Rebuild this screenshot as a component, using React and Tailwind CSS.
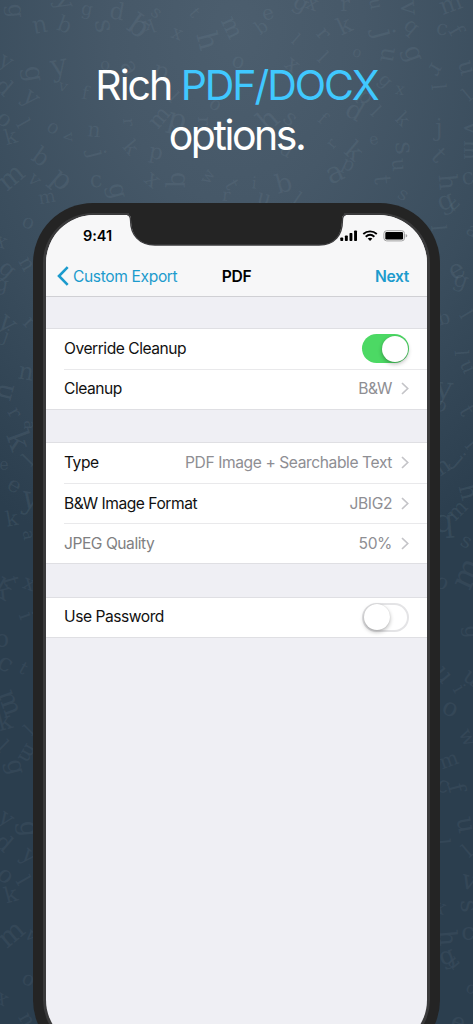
import clsx from 'clsx';

// [character, center x, center y, font size, rotation]
const LETTERS = [
  ['g', 15, 11, 27, 85], ['y', 64, 3, 30, 60], ['g', 87, 10, 22, 10], ['d', 117, 13, 28, 10],
  ['s', 156, 13, 21, 40], ['t', 194, 13, 20, 50], ['u', 40, 27, 29, 170], ['b', 64, 26, 26, 20],
  ['s', 103, 26, 32, 80], ['q', 137, 28, 36, 215], ['k', 149, 25, 22, 160], ['x', 177, 34, 23, 20],
  ['h', 206, 41, 34, 75], ['m', 231, 28, 28, 65], ['y', 6, 62, 27, 30], ['g', 33, 74, 31, 80],
  ['y', 59, 67, 36, -10], ['o', 105, 65, 20, 0], ['a', 129, 68, 30, 60], ['p', 161, 72, 28, 20],
  ['v', 63, 87, 19, 15], ['y', 31, 98, 30, 40], ['f', 85, 94, 22, 10], ['d', 3, 88, 28, 40],
  ['o', 4, 120, 27, 40], ['l', 22, 124, 24, 60], ['o', 53, 128, 23, 30], ['v', 68, 137, 20, 85],
  ['n', 94, 131, 25, 5], ['r', 128, 122, 20, 85], ['m', 160, 118, 27, -50], ['p', 177, 121, 35, 15],
  ['k', 11, 138, 25, -15], ['j', 96, 154, 28, 75], ['k', 130, 148, 24, 50], ['p', 156, 153, 26, 10],
  ['b', 40, 158, 29, 35], ['m', 12, 178, 33, -40], ['v', 34, 180, 23, 45], ['p', 61, 180, 35, 40],
  ['c', 96, 181, 27, -5], ['g', 117, 191, 30, 75], ['x', 152, 180, 28, 40], ['b', 178, 180, 31, 270],
  ['w', 208, 177, 20, -60], ['t', 231, 185, 24, 60], ['m', 47, 198, 22, -10], ['r', 226, 196, 21, 5],
  ['o', 215, 105, 22, 30], ['r', 203, 121, 22, 90], ['l', 173, 98, 22, 45],
  ['e', 268, 14, 24, -15], ['g', 301, 4, 27, 30], ['x', 312, 4, 25, 20], ['r', 345, 5, 24, 0],
  ['u', 375, 4, 22, 80], ['v', 408, 8, 31, 85], ['m', 451, 5, 29, -20], ['b', 262, 28, 22, -35],
  ['l', 295, 40, 20, 40], ['r', 323, 34, 25, 50], ['k', 345, 27, 28, -25], ['j', 383, 34, 34, 75],
  ['q', 411, 27, 25, 40], ['c', 442, 29, 25, 10], ['f', 455, 31, 26, 60], ['o', 238, 62, 25, 15],
  ['x', 292, 65, 27, 40], ['l', 322, 58, 23, 45], ['o', 357, 53, 18, 15], ['u', 388, 55, 29, 100],
  ['g', 413, 54, 31, 70], ['r', 435, 69, 27, 120], ['u', 466, 68, 28, 75], ['g', 385, 81, 22, 45],
  ['x', 400, 90, 20, 10], ['l', 437, 87, 24, 85], ['l', 468, 96, 23, -40], ['h', 269, 121, 35, -40],
  ['s', 290, 119, 27, 40], ['f', 322, 119, 20, 40], ['d', 354, 112, 31, 30], ['p', 365, 97, 25, 45],
  ['l', 375, 112, 22, 45], ['k', 402, 120, 23, 45], ['j', 439, 129, 29, 0], ['v', 471, 128, 31, 90],
  ['e', 374, 140, 19, -10], ['r', 332, 144, 19, -50], ['k', 353, 152, 30, 40], ['p', 348, 165, 23, 25],
  ['a', 335, 174, 35, -25], ['s', 403, 148, 31, 85], ['u', 398, 165, 25, 85], ['t', 438, 156, 29, 45],
  ['m', 470, 150, 25, 90], ['t', 381, 180, 28, 85], ['h', 446, 182, 30, 85], ['c', 468, 178, 27, -10],
  ['b', 284, 185, 31, -15], ['i', 254, 184, 20, 5], ['u', 264, 199, 26, 15], ['l', 296, 200, 24, 35],
  ['s', 403, 195, 22, 30], ['g', 446, 202, 31, -20], ['u', 455, 205, 20, 45], ['d', 286, 151, 22, 30],
  // left gutter
  ['o', 28, 223, 24, 20], ['x', 1, 242, 24, 20], ['n', 26, 264, 25, 60], ['g', 7, 270, 28, 40],
  ['g', 2, 285, 24, 10], ['y', 7, 324, 34, 40], ['r', 29, 323, 24, 45], ['j', 6, 337, 22, 20],
  ['n', 26, 373, 29, 10], ['n', 5, 392, 33, 285], ['r', 14, 413, 24, 60], ['a', 28, 425, 19, 90],
  ['k', 17, 441, 37, 70], ['l', 29, 461, 25, -45], ['e', 4, 466, 19, 0], ['e', 14, 486, 26, 30],
  ['y', 31, 500, 38, 10], ['k', 12, 520, 25, -10], ['a', 28, 535, 20, 80], ['t', 10, 581, 26, 75],
  ['k', 2, 591, 32, 30], ['x', 29, 584, 25, 20], ['i', 25, 616, 25, 70], ['o', 2, 641, 28, 0],
  ['c', 5, 664, 30, 30], ['t', 23, 669, 21, 30], ['m', 9, 703, 33, 70], ['k', 5, 723, 29, -15],
  ['l', 2, 747, 24, 45], ['l', 30, 731, 22, -45], ['m', 27, 753, 24, 120], ['g', 15, 767, 29, 75],
  ['y', 6, 819, 28, 35], ['g', 28, 829, 31, 85], ['d', 3, 844, 28, 40], ['y', 29, 856, 28, 40],
  ['o', 5, 876, 28, 40], ['l', 22, 881, 25, 60], ['k', 11, 896, 26, -15], ['m', 12, 935, 33, -40],
  ['v', 31, 936, 22, 45], ['o', 28, 980, 24, 20], ['x', 2, 999, 24, 30], ['n', 26, 1020, 25, 60],
  // right gutter
  ['l', 437, 228, 25, 85], ['a', 472, 231, 22, 30], ['e', 457, 271, 32, -30], ['g', 461, 281, 27, 20],
  ['b', 444, 319, 23, -15], ['l', 465, 315, 23, 60], ['l', 460, 353, 23, 85], ['u', 467, 367, 24, 65],
  ['y', 444, 390, 38, 5], ['o', 441, 406, 23, 20], ['t', 466, 411, 26, 60], ['l', 470, 445, 23, 50],
  ['j', 459, 461, 26, 40], ['n', 443, 467, 28, -35], ['h', 467, 492, 30, 75], ['m', 458, 511, 25, -45],
  ['q', 444, 523, 38, -5], ['s', 466, 542, 24, 25], ['m', 468, 574, 39, -65], ['o', 442, 583, 25, 20],
  ['g', 471, 632, 24, 85], ['u', 443, 675, 29, 50], ['u', 471, 678, 27, 35], ['i', 458, 689, 22, 60],
  ['o', 450, 709, 30, 25], ['w', 467, 738, 24, 65], ['m', 449, 761, 24, -20], ['c', 443, 786, 27, 20],
  ['f', 455, 788, 28, 75], ['u', 465, 825, 31, 80], ['l', 441, 842, 24, 85], ['l', 468, 852, 24, -40],
  ['v', 469, 882, 32, 15], ['s', 468, 906, 30, 85], ['x', 440, 908, 24, 20], ['h', 446, 938, 30, 85],
  ['c', 468, 933, 29, 0], ['g', 447, 957, 29, -20], ['u', 454, 963, 22, 50], ['o', 471, 989, 20, 20],
  ['e', 458, 1023, 28, 20],
];

const GROUPS = [
  [
    { label: 'Override Cleanup', toggle: true, on: true },
    { label: 'Cleanup', value: 'B&W' },
  ],
  [
    { label: 'Type', value: 'PDF Image + Searchable Text' },
    { label: 'B&W Image Format', value: 'JBIG2' },
    { label: 'JPEG Quality', value: '50%', disabled: true },
  ],
  [{ label: 'Use Password', toggle: true, on: false }],
];

function LetterPattern() {
  return (
    <svg className="absolute inset-0" width="473" height="1024" aria-hidden="true">
      {LETTERS.map(([char, x, y, size, angle], i) => (
        <text
          key={i}
          transform={`translate(${x} ${y}) rotate(${angle})`}
          y={size * 0.23}
          fontSize={size * 0.84}
          textAnchor="middle"
          fill={y > 560 ? '#384a5b' : '#8a9fae'}
          fillOpacity={y > 560 ? 0.75 : 0.12}
          className="font-['DejaVu_Serif',serif]"
        >
          {char}
        </text>
      ))}
    </svg>
  );
}

function Notch() {
  return (
    <svg className="absolute left-[93px] top-[9px]" width="222" height="36" viewBox="0 0 222 36" aria-hidden="true">
      <path
        d="M3 1V3Q5 4 5 8C5 23 13 33 29 33H193C209 33 216 23 216 8Q216 4 218 3V1Z"
        fill="#242424"
      />
      <path
        d="M1 2.500Q4.500 3 4.500 8C4.500 23 13 33 29 33H193C209 33 216.500 23 216.500 8Q216.500 3 220 2.500"
        fill="none"
        stroke="#3c3c3e"
        strokeWidth="1.300"
      />
    </svg>
  );
}

function StatusIcons() {
  return (
    <svg width="70" height="14" viewBox="0 0 70 14" aria-hidden="true">
      <rect x="0.300" y="8.500" width="2.900" height="3.500" rx="0.800" />
      <rect x="4.900" y="6.500" width="2.900" height="5.500" rx="0.800" />
      <rect x="9.500" y="4" width="2.900" height="8" rx="0.800" />
      <rect x="14.100" y="1.500" width="2.900" height="10.500" rx="0.800" />
      <g fill="none" stroke="#000" strokeWidth="1.900">
        <path d="M23.300 5C27.200 1.500 32.900 1.500 36.800 5" />
        <path d="M25.700 7.700C28.300 5.500 31.800 5.500 34.400 7.700" />
      </g>
      <path d="M27.700 9.600C29 8.500 31.100 8.500 32.400 9.600L30.050 12Z" />
      <rect x="43.900" y="1.700" width="20.600" height="10.200" rx="2.800" fill="none" stroke="#a2a2a2" />
      <rect x="45.300" y="3.100" width="17.800" height="7.400" rx="1.300" />
      <path d="M65.700 5Q67.300 5.600 67.300 6.800T65.700 8.600Z" fill="#a2a2a2" />
    </svg>
  );
}

function Toggle({ on }) {
  return (
    <div
      className={clsx(
        'flex h-[29px] w-[47px] items-center rounded-full',
        on ? 'justify-end bg-[#4cd964] px-[1.500px]' : 'justify-start border-2 border-[#e4e4e6] bg-white',
      )}
    >
      <div className="h-[26px] w-[26px] rounded-full bg-white shadow-[0_2px_4px_rgba(0,0,0,0.28),0_0_1px_rgba(0,0,0,0.18)]" />
    </div>
  );
}

function Row({ row, last }) {
  return (
    <div className={clsx('flex pl-[18px]', last ? 'h-[39px]' : 'h-[40.500px]')}>
      <div className={clsx('flex flex-1 items-center pr-[18px]', !last && 'border-b border-[#e9e9eb]')}>
        <span className={clsx('text-[15.600px] tracking-[-0.030em]', row.disabled ? 'text-[#7f7f82]' : 'text-[#111]')}>
          {row.label}
        </span>
        <div className="ml-auto flex items-center">
          {row.toggle ? (
            <Toggle on={row.on} />
          ) : (
            <>
              <span className="text-[15.600px] tracking-[-0.026em] text-[#8e8e93]">{row.value}</span>
              <svg className="ml-[9px]" width="8" height="13" viewBox="0 0 8 13" fill="none" aria-hidden="true">
                <path d="M1 1L6.700 6.500L1 12" stroke="#c4c4c8" strokeWidth="1.700" />
              </svg>
            </>
          )}
        </div>
      </div>
    </div>
  );
}

export default function App() {
  return (
    <div className="relative h-[1024px] w-[473px] overflow-hidden bg-[#2b3e4e] bg-[radial-gradient(ellipse_420px_570px_at_50%_3%,#4c5e6e_0%,#465868_30%,#3a4d5d_65%,#2b3e4e_100%)] font-['Inter',sans-serif]">
      <LetterPattern />

      <header className="relative h-[203px] pt-[60px] text-center text-[41px] leading-[50px] tracking-[-0.050em] text-white">
        <div>
          Rich <span className="text-[#40c8ff]">PDF/DOCX</span>
        </div>
        <div className="tracking-[-0.060em]">options.</div>
      </header>

      <div className="relative ml-[33px] h-[857px] w-[407px] rounded-[60px] bg-[#242424] p-[10px]">
        <div className="h-full rounded-[50px] bg-[#3a3a3b] px-[3px] py-[2px]">
          <div className="h-full overflow-hidden rounded-[48px] bg-[#efeff4]">
            <div className="h-[82px] border-b border-[#d0d0d4] bg-[#f7f7f8]">
              <div className="flex h-[42px] items-center justify-between pl-[37px] pr-[17px]">
                <span className="text-[14.500px] font-semibold tracking-[-0.005em] text-black">9:41</span>
                <StatusIcons />
              </div>
              <div className="grid h-[39px] grid-cols-3 items-center pl-[11px] pr-[18px] text-[15.600px] tracking-[-0.020em]">
                <div className="flex items-center gap-[4px] whitespace-nowrap text-[#1c9bcd]">
                  <svg className="shrink-0" width="12" height="20" viewBox="0 0 12 20" fill="none" aria-hidden="true">
                    <path d="M10.700 1.200L2 10L10.700 18.800" stroke="currentColor" strokeWidth="2.600" />
                  </svg>
                  <span className="tracking-[-0.024em]">Custom Export</span>
                </div>
                <div className="pl-[7px] text-center font-semibold text-black">PDF</div>
                <div className="text-right font-semibold text-[#1c9bcd]">Next</div>
              </div>
            </div>

            <div className="flex flex-col gap-[32.500px] pt-[31px]">
              {GROUPS.map((rows) => (
                <section key={rows[0].label} className="border-y border-[#dfdfe3] bg-white">
                  {rows.map((row, i) => (
                    <Row key={row.label} row={row} last={i === rows.length - 1} />
                  ))}
                </section>
              ))}
            </div>
          </div>
        </div>
        <Notch />
      </div>
    </div>
  );
}
